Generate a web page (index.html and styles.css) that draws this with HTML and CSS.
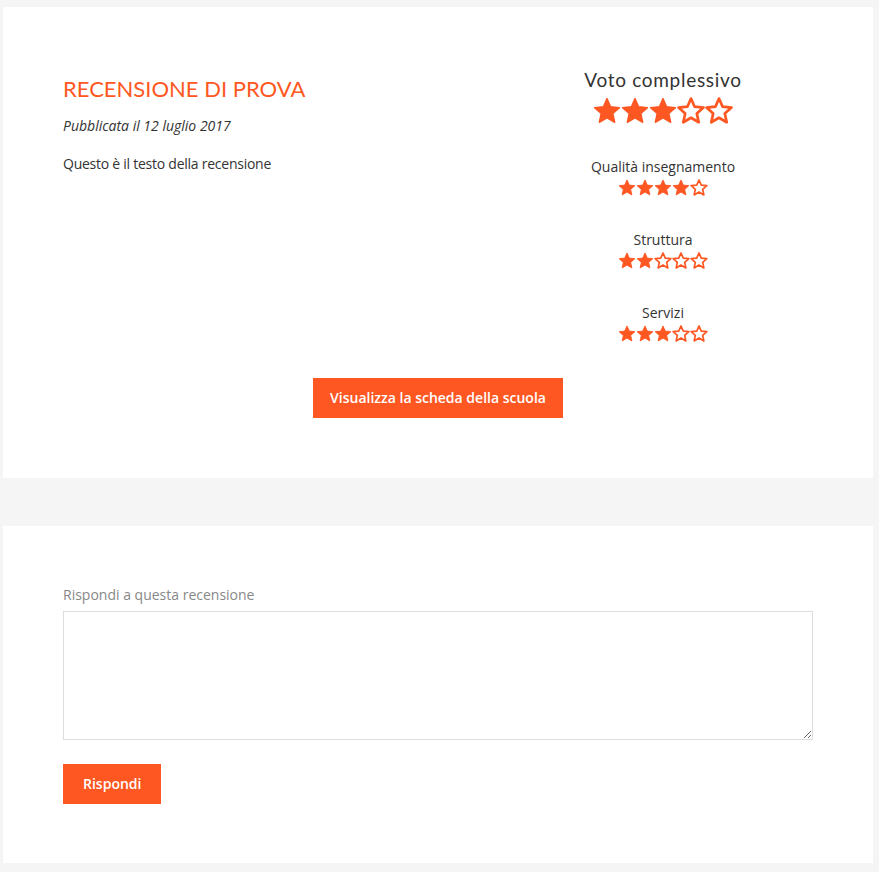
FILE: index.html
```html
<!DOCTYPE html>
<html lang="it">
<head>
    <meta charset="UTF-8">
    <meta name="viewport" content="width=device-width, initial-scale=1.0">
    <title>Recensione di prova</title>
    <link rel="stylesheet" href="styles.css">
</head>
<body>
    <svg width="0" height="0" class="defs">
        <defs>
            <symbol id="star-full" viewBox="-1.5 -1.5 27 26">
                <polygon points="12,0 15.47,7.85 24,8.72 17.61,14.44 19.42,22.83 12,18.52 4.58,22.83 6.39,14.44 0,8.72 8.53,7.85" fill="#ff5722" stroke="#ff5722" stroke-width="1.4" stroke-linejoin="round"/>
            </symbol>
            <symbol id="star-empty" viewBox="-1.5 -1.5 27 26">
                <polygon points="12,0 15.47,7.85 24,8.72 17.61,14.44 19.42,22.83 12,18.52 4.58,22.83 6.39,14.44 0,8.72 8.53,7.85" fill="none" stroke="#ff5722" stroke-width="2.6" stroke-linejoin="round"/>
            </symbol>
        </defs>
    </svg>

    <div class="card review">
        <div class="review-grid">
            <div class="review-text">
                <h2 class="review-title">RECENSIONE DI PROVA</h2>
                <p class="review-date">Pubblicata il 12 luglio 2017</p>
                <p class="review-body">Questo è il testo della recensione</p>
            </div>

            <div class="ratings">
                <div class="rating-main">
                    <h3>Voto complessivo</h3>
                    <div class="stars stars-big">
                        <svg><use href="#star-full"/></svg>
                        <svg><use href="#star-full"/></svg>
                        <svg><use href="#star-full"/></svg>
                        <svg><use href="#star-empty"/></svg>
                        <svg><use href="#star-empty"/></svg>
                    </div>
                </div>

                <div class="rating">
                    <div class="rating-label">Qualità insegnamento</div>
                    <div class="stars">
                        <svg><use href="#star-full"/></svg>
                        <svg><use href="#star-full"/></svg>
                        <svg><use href="#star-full"/></svg>
                        <svg><use href="#star-full"/></svg>
                        <svg><use href="#star-empty"/></svg>
                    </div>
                </div>

                <div class="rating">
                    <div class="rating-label">Struttura</div>
                    <div class="stars">
                        <svg><use href="#star-full"/></svg>
                        <svg><use href="#star-full"/></svg>
                        <svg><use href="#star-empty"/></svg>
                        <svg><use href="#star-empty"/></svg>
                        <svg><use href="#star-empty"/></svg>
                    </div>
                </div>

                <div class="rating">
                    <div class="rating-label">Servizi</div>
                    <div class="stars">
                        <svg><use href="#star-full"/></svg>
                        <svg><use href="#star-full"/></svg>
                        <svg><use href="#star-full"/></svg>
                        <svg><use href="#star-empty"/></svg>
                        <svg><use href="#star-empty"/></svg>
                    </div>
                </div>
            </div>
        </div>

        <div class="review-actions">
            <a href="#" class="btn">Visualizza la scheda della scuola</a>
        </div>
    </div>

    <div class="card reply">
        <form class="reply-form">
            <label for="reply" class="reply-label">Rispondi a questa recensione</label>
            <textarea id="reply" name="reply"></textarea>
            <div>
                <button type="submit" class="btn">Rispondi</button>
            </div>
        </form>
    </div>
</body>
</html>
```

FILE: styles.css
```css
body {
    margin: 0;
    padding: 7px 6px 9px 3px;
    background-color: #f5f5f5;
    font-family: "Open Sans", sans-serif;
    font-size: 14px;
    color: #333;
}
.defs {
    position: absolute;
    width: 0;
    height: 0;
}
.card {
    background: white;
    padding: 60px;
}
.review {
    margin-bottom: 48px;
}
.reply {
    padding-top: 59px;
    padding-bottom: 59px;
}
.review-grid {
    display: grid;
    grid-template-columns: 1fr 300px;
}
.review-title {
    font-family: Lato, sans-serif;
    font-weight: 400;
    font-size: 22px;
    color: #ff5722;
    margin: 8px 0 14px;
}
.review-text p {
    margin: 0 0 18px;
    line-height: 20px;
}
.review-date {
    font-style: italic;
}
.review-body {
    letter-spacing: -0.25px;
}
.ratings {
    text-align: center;
    padding-top: 1px;
}
.rating-main h3 {
    font-family: Lato, sans-serif;
    font-weight: 400;
    font-size: 19px;
    letter-spacing: 0.7px;
    margin: 0 0 5px;
    line-height: 24px;
}
.rating-main {
    margin-bottom: 33px;
}
.rating {
    margin-bottom: 34px;
}
.rating:last-child {
    margin-bottom: 0;
}
.rating-label {
    line-height: 20px;
}
.stars {
    display: flex;
    justify-content: center;
    margin-top: 2px;
}
.stars svg {
    width: 18px;
    height: 17px;
}
.stars-big {
    margin-top: 0;
}
.stars-big svg {
    width: 28px;
    height: 27px;
}
.review-actions {
    text-align: center;
    margin-top: 36px;
}
.btn {
    display: inline-block;
    background-color: #ff5722;
    color: white;
    font-family: "Open Sans", sans-serif;
    font-size: 14px;
    font-weight: 600;
    text-decoration: none;
    border: none;
    padding: 0 17px;
    line-height: 40px;
    height: 40px;
    cursor: pointer;
}
.reply-form {
    display: flex;
    flex-direction: column;
}
.reply-label {
    color: #888;
    line-height: 20px;
    margin-bottom: 6px;
}
.reply-form textarea {
    width: 750px;
    height: 129px;
    box-sizing: border-box;
    border: 1px solid #ddd;
    margin: 0 0 24px;
    font-family: "Open Sans", sans-serif;
}
.reply .btn {
    padding: 0 20px;
}
```
